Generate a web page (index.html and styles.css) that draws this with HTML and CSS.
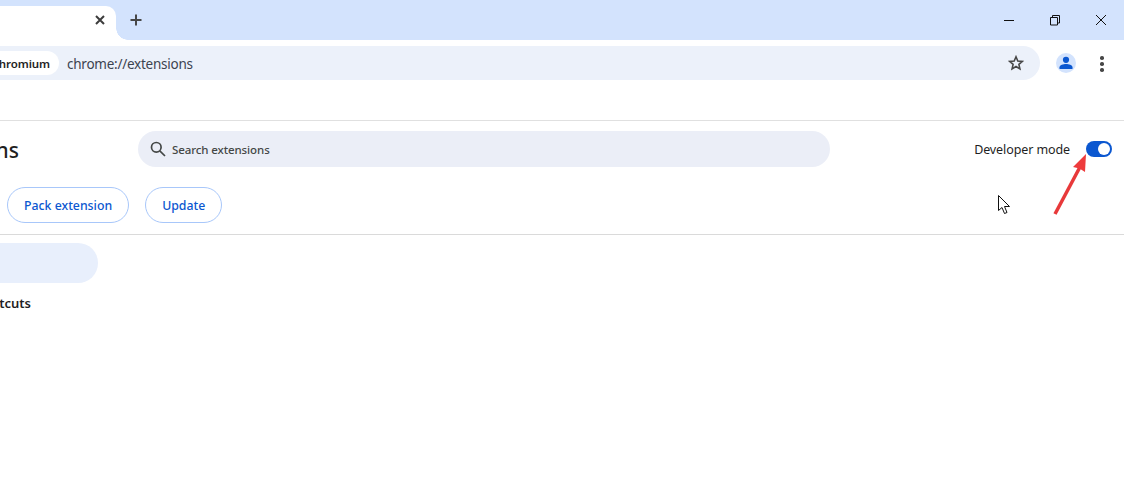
FILE: index.html
```html
<!DOCTYPE html>
<html lang="en">
<head>
    <meta charset="UTF-8">
    <meta name="viewport" content="width=device-width, initial-scale=1.0">
    <title>Extensions</title>
    <link rel="stylesheet" href="styles.css">
</head>
<body>
    <!-- Tab strip -->
    <div class="tabstrip">
        <div class="tab">
            <svg class="tab-close" width="10" height="10" viewBox="0 0 10 10"><path d="M1 1l8 8M9 1l-8 8"/></svg>
            <span class="tab-flare"></span>
        </div>
        <svg class="new-tab" width="12" height="12" viewBox="0 0 12 12"><path d="M6 .5v11M.5 6h11"/></svg>
        <div class="window-controls">
            <svg width="46" height="40" viewBox="0 0 46 40"><path d="M18 20.500h10"/></svg>
            <svg width="46" height="40" viewBox="0 0 46 40"><path d="M18.500 17.500h7v7.500h-7zM20.500 17.500v-2h7v7.500h-2"/></svg>
            <svg width="46" height="40" viewBox="0 0 46 40"><path d="M18 15l10 10M28 15L18 25"/></svg>
        </div>
    </div>

    <!-- Toolbar -->
    <div class="toolbar">
        <div class="omnibox">
            <span class="chip">Chromium</span>
            <span class="url">chrome://extensions</span>
            <svg class="star" width="16" height="16" viewBox="0 0 16 16"><path d="M8 1.800l1.800 4.200 4.500.4-3.400 3 1 4.500L8 11.500l-3.900 2.400 1-4.500-3.400-3 4.500-.4z"/></svg>
        </div>
        <div class="avatar">
            <svg width="14" height="14" viewBox="0 0 14 14"><circle cx="7" cy="3.800" r="3.100"/><path d="M.5 13v-1.800C.5 9 4.300 8 7 8s6.500 1 6.500 3.200V13z"/></svg>
        </div>
        <div class="menu-dots"><i></i><i></i><i></i></div>
    </div>
    <div class="bookmarks"></div>

    <!-- Extensions page header -->
    <div class="page-header">
        <div class="header-row">
            <h1>Extensions</h1>
            <div class="search">
                <svg width="16" height="16" viewBox="0 0 16 16"><circle cx="6.300" cy="6.300" r="4.800"/><path d="M9.800 9.800l5.200 5.200"/></svg>
                <span>Search extensions</span>
            </div>
            <div class="dev-mode">
                <span>Developer mode</span>
                <div class="toggle"><i></i></div>
            </div>
        </div>
        <div class="button-row">
            <button>Pack extension</button>
            <button>Update</button>
        </div>
    </div>

    <!-- Sidebar -->
    <div class="sidebar">
        <div class="side-active"></div>
        <div class="side-link">Keyboard shortcuts</div>
    </div>

    <!-- Annotation and mouse pointer on top of the screenshot -->
    <svg class="arrow" width="40" height="64" viewBox="0 0 40 64"><path class="arrow-line" d="M2 61L27 14"/><path class="arrow-head" d="M33 1L32 19 26.500 15.500 20 14z"/></svg>
    <svg class="pointer" width="14" height="21" viewBox="0 0 14 21"><path d="M1.500 1.500v15l3.500-3 2.500 6 2.500-1-2.500-6h5z"/></svg>
</body>
</html>
```
FILE: styles.css
```css
* {
    box-sizing: border-box;
}
html, body {
    height: 491px;
    overflow: hidden;
}
body {
    margin: 0;
    position: relative;
    background-color: #ffffff;
    font-family: "Noto Sans", "Open Sans", sans-serif;
    color: #1f1f1f;
}

/* Tab strip */
.tabstrip {
    display: flex;
    height: 40px;
    background-color: #d3e3fd;
}
.tab {
    position: relative;
    width: 116px;
    height: 34px;
    margin-top: 6px;
    background-color: #ffffff;
    border-radius: 0 10px 0 0;
}
.tab-close {
    position: absolute;
    left: 95px;
    top: 9px;
}
.tab-close path {
    fill: none;
    stroke: #3c3c3c;
    stroke-width: 2;
}
.tab-flare {
    position: absolute;
    left: 116px;
    bottom: 0;
    width: 12px;
    height: 12px;
    background: radial-gradient(circle at 100% 0, transparent 11.500px, #ffffff 12px);
}
.new-tab {
    margin: 14px 0 0 14px;
}
.new-tab path {
    fill: none;
    stroke: #474747;
    stroke-width: 2;
}
.window-controls {
    display: flex;
    margin-left: auto;
}
.window-controls svg path {
    fill: none;
    stroke: #111111;
    stroke-width: 1;
}

/* Toolbar */
.toolbar {
    display: flex;
    align-items: flex-start;
    height: 40px;
    padding-top: 6px;
    background-color: #ffffff;
    border-radius: 0 8px 0 0;
}
.omnibox {
    display: flex;
    align-items: center;
    width: 1040px;
    height: 34px;
    background-color: #ecf1fa;
    border-radius: 0 17px 17px 0;
}
.chip {
    display: flex;
    align-items: center;
    justify-content: flex-end;
    width: 59px;
    height: 24px;
    padding-right: 9px;
    background-color: #ffffff;
    border-radius: 0 12px 12px 0;
    font-size: 11.500px;
    font-weight: 600;
    letter-spacing: -0.1px;
    white-space: nowrap;
    overflow: hidden;
}
.url {
    margin: 1px 0 0 8px;
    font-size: 13.500px;
    letter-spacing: -0.25px;
    color: #3c4350;
}
.star {
    margin-left: auto;
    margin-right: 16px;
}
.star path {
    fill: none;
    stroke: #474747;
    stroke-width: 1.600;
}
.avatar {
    display: flex;
    align-items: center;
    justify-content: center;
    width: 20px;
    height: 20px;
    margin: 7px 0 0 16px;
    background-color: #d3e3fd;
    border-radius: 50%;
}
.avatar svg {
    fill: #0b57d0;
}
.menu-dots {
    display: flex;
    flex-direction: column;
    gap: 2.500px;
    margin: 10px 0 0 24px;
}
.menu-dots i {
    display: block;
    width: 3.500px;
    height: 3.500px;
    background-color: #474747;
    border-radius: 50%;
}
.bookmarks {
    height: 41px;
    border-bottom: 1px solid #e0e0e0;
}

/* Extensions page header */
.page-header {
    height: 114px;
    padding-top: 10px;
    border-bottom: 1px solid #dadada;
}
.header-row {
    display: flex;
    align-items: center;
    height: 36px;
}
h1 {
    width: 19px;
    margin: 2px 0 0;
    flex-shrink: 0;
    direction: rtl;
    font-size: 21px;
    font-weight: 500;
    white-space: nowrap;
}
.search {
    display: flex;
    align-items: center;
    gap: 6px;
    width: 692px;
    height: 36px;
    margin-left: 119px;
    padding-left: 12px;
    background-color: #ebeef7;
    border-radius: 18px;
    font-size: 11.500px;
    font-weight: 500;
    letter-spacing: -0.1px;
    color: #444746;
}
.search svg {
    fill: none;
    stroke: #444746;
    stroke-width: 1.700;
}
.dev-mode {
    display: flex;
    align-items: center;
    gap: 16px;
    margin-left: auto;
    margin-right: 12px;
    font-size: 12.500px;
    letter-spacing: -0.1px;
}
.toggle {
    display: flex;
    align-items: center;
    justify-content: flex-end;
    width: 26px;
    height: 16px;
    padding-right: 2px;
    background-color: #0b57d0;
    border-radius: 8px;
}
.toggle i {
    display: block;
    width: 12px;
    height: 12px;
    background-color: #ffffff;
    border-radius: 50%;
}
.button-row {
    display: flex;
    gap: 16px;
    margin: 20px 0 0 7px;
}
button {
    height: 36px;
    padding: 0 16px;
    background-color: #ffffff;
    border: 1px solid #a8c7fa;
    border-radius: 18px;
    font-family: inherit;
    font-size: 12.300px;
    font-weight: 500;
    color: #0b57d0;
}

/* Sidebar */
.sidebar {
    padding-top: 8px;
}
.side-active {
    width: 98px;
    height: 40px;
    background-color: #e8effc;
    border-radius: 0 20px 20px 0;
}
.side-link {
    width: 31px;
    margin-top: 11px;
    direction: rtl;
    font-size: 13px;
    font-weight: 600;
    white-space: nowrap;
}

/* Overlays */
.arrow {
    position: absolute;
    left: 1053px;
    top: 153px;
}
.arrow-line {
    fill: none;
    stroke: #e8393a;
    stroke-width: 3.500;
}
.arrow-head {
    fill: #ee3b3c;
}
.pointer {
    position: absolute;
    left: 997px;
    top: 194px;
}
.pointer path {
    fill: #ffffff;
    stroke: #111111;
    stroke-width: 1;
}
```
